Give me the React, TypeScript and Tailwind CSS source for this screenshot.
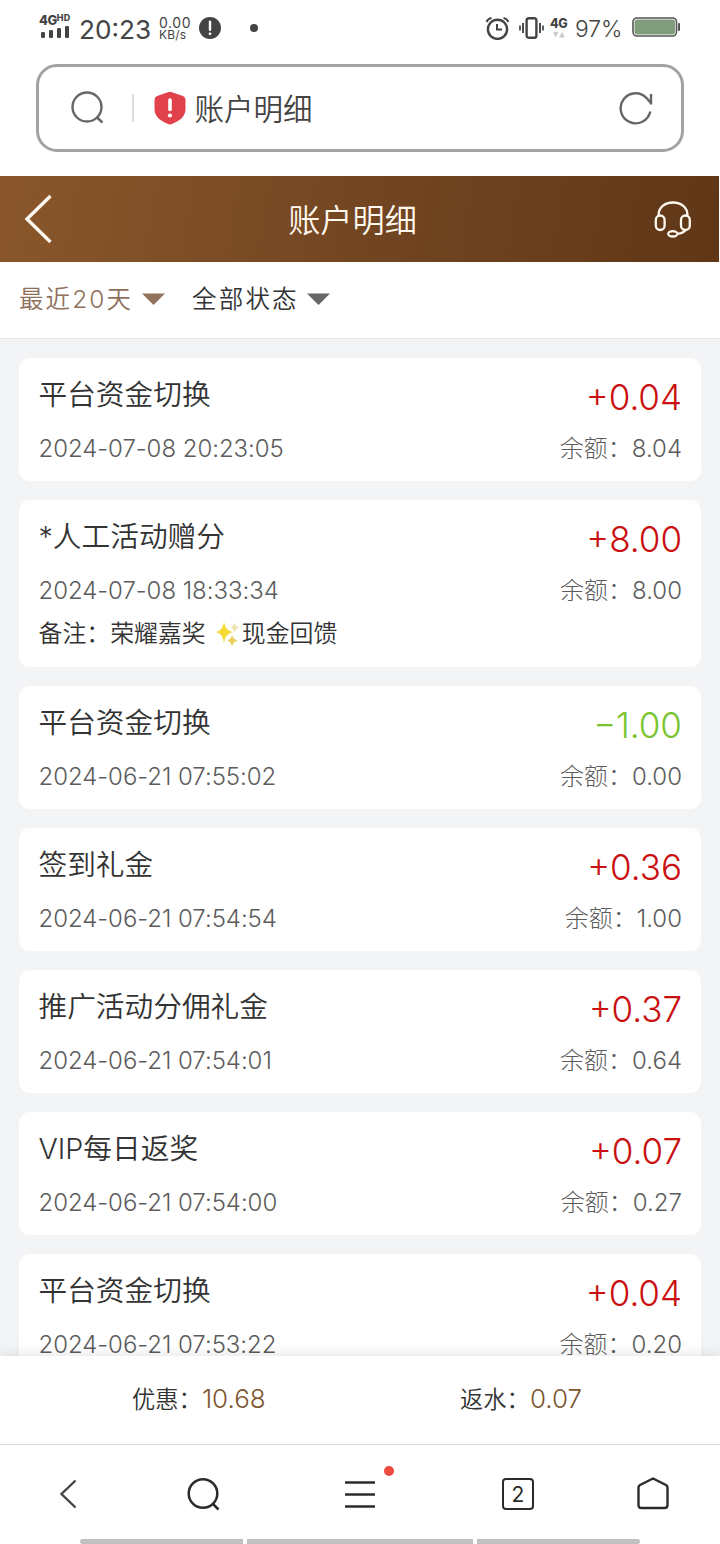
import React from 'react';
import clsx from 'clsx';

interface RecordItem {
  id: number;
  title: string;
  time: string;
  amount: string;
  balance: string;
  remark?: [string, string];
}

const records: RecordItem[] = [
  { id: 1, title: '平台资金切换', time: '2024-07-08 20:23:05', amount: '+0.04', balance: '8.04' },
  { id: 2, title: '*人工活动赠分', time: '2024-07-08 18:33:34', amount: '+8.00', balance: '8.00', remark: ['荣耀嘉奖', '现金回馈'] },
  { id: 3, title: '平台资金切换', time: '2024-06-21 07:55:02', amount: '-1.00', balance: '0.00' },
  { id: 4, title: '签到礼金', time: '2024-06-21 07:54:54', amount: '+0.36', balance: '1.00' },
  { id: 5, title: '推广活动分佣礼金', time: '2024-06-21 07:54:01', amount: '+0.37', balance: '0.64' },
  { id: 6, title: 'VIP每日返奖', time: '2024-06-21 07:54:00', amount: '+0.07', balance: '0.27' },
  { id: 7, title: '平台资金切换', time: '2024-06-21 07:53:22', amount: '+0.04', balance: '0.20' },
];

const StatusBar: React.FC = () => (
  <div className="flex h-[64px] shrink-0 items-start pl-[39px] pr-[39px] pt-[14px] text-[#444]">
    <div className="w-[32px]">
      <div className="flex h-[12px] items-start font-extrabold leading-[12px]">
        <span className="text-[13px] tracking-[-0.5px]">4G</span>
        <span className="text-[9px] leading-[8px] tracking-[0.2px]">HD</span>
      </div>
      <svg width="32" height="13" viewBox="0 0 32 13" fill="currentColor">
        <rect x="2" y="6" width="4" height="6" rx="1.3" />
        <rect x="10" y="4" width="4" height="8" rx="1.3" />
        <rect x="18" y="2" width="4" height="10" rx="1.3" />
        <rect x="26" y="0" width="4" height="12" rx="1.3" />
      </svg>
    </div>
    <span className="ml-[8px] mt-px w-[72px] whitespace-nowrap text-[26.2px] leading-[30px]">20:23</span>
    <div className="ml-[8px] mt-[2px] w-[33px] whitespace-nowrap">
      <div className="text-[14px] leading-[13px] tracking-[0.6px]">0.00</div>
      <div className="text-[12px] leading-[12px] tracking-[0.2px]">KB/s</div>
    </div>
    <svg className="ml-[7px] mt-[3px]" width="22" height="22" viewBox="0 0 22 22">
      <circle cx="11" cy="11" r="11" fill="#444" />
      <path d="M11 4.800v8" stroke="#fff" strokeWidth="2.400" strokeLinecap="round" />
      <circle cx="11" cy="16.800" r="1.400" fill="#fff" />
    </svg>
    <span className="ml-[29px] mt-[10px] size-[8px] rounded-full bg-[#444]" />

    <div className="ml-auto flex">
      <svg className="mt-[2px]" width="24" height="24" viewBox="0 0 24 24" fill="none" stroke="currentColor" strokeWidth="2.400">
        <circle cx="12.500" cy="13.300" r="9.600" />
        <path d="M12 8v5.500h5" strokeWidth="2" />
        <path d="M1.500 6Q3 2.600 6.500 2M23.500 6Q22 2.600 18.500 2" strokeWidth="2" />
      </svg>
      <svg className="ml-[9px] mt-[2px]" width="27" height="24" viewBox="0 0 27 24" fill="none" stroke="currentColor">
        <rect x="8.600" y="2.200" width="9.800" height="19.600" rx="2.400" strokeWidth="2.400" />
        <path d="M5 7v10M22 7v10" strokeWidth="1.900" />
        <path d="M2 9.500v5M25 9.500v5" strokeWidth="1.700" />
      </svg>
      <div className="ml-[5px] mt-[3px] w-[17px]">
        <div className="text-[12.500px] font-extrabold leading-[13px] tracking-[-0.400px]">4G</div>
        <svg width="17" height="8" viewBox="0 0 17 8" fill="#ccc">
          <path d="M3 2h5.500L5.700 7.500zM9 7.500h6L12 2z" />
        </svg>
      </div>
      <span className="ml-[8px] w-[48px] whitespace-nowrap text-[22.800px] font-light leading-[30px]">97%</span>
      <svg className="ml-[9px] mt-[3px]" width="49" height="21" viewBox="0 0 49 21">
        <rect x="1" y="1" width="43.500" height="18" rx="4" fill="#fff" stroke="#555" strokeWidth="1.600" />
        <rect x="2.500" y="2.500" width="40.500" height="15" rx="2.500" fill="#7f9d7c" />
        <rect x="46" y="6" width="2" height="8" rx="1" fill="#555" />
      </svg>
    </div>
  </div>
);

const AddressBar: React.FC = () => (
  <div className="mx-[36px] flex h-[88px] shrink-0 items-center rounded-[21px] border-[3px] border-[#a3a3a3] pl-[32px] pr-[28px]">
    <svg width="34" height="34" viewBox="0 0 34 34" fill="none" stroke="#666" strokeWidth="2.400">
      <circle cx="16" cy="16" r="14.500" />
      <path d="M25.500 26l6 5.500" />
    </svg>
    <span className="ml-[27px] h-[28px] w-[1.500px] bg-[#ddd]" />
    <svg className="ml-[20px]" width="32" height="34" viewBox="0 0 32 34">
      <path d="M14 1.200Q16 .3 18 1.200L29 5Q31.500 6 31.500 9V18C31.500 26 25 30 18 33Q16 33.800 14 33C7 30 .5 26 .5 18V9Q.5 6 3 5Z" fill="#e0414a" />
      <path d="M16 9v9.500" stroke="#fff" strokeWidth="3.600" strokeLinecap="round" />
      <circle cx="16" cy="24.500" r="2.100" fill="#fff" />
    </svg>
    <span className="ml-[9px] pt-[2px] text-[29.500px] font-[350] leading-[40px] text-[#444]">账户明细</span>
    <svg className="ml-auto" width="34" height="34" viewBox="0 0 34 34" fill="none" stroke="#666" strokeWidth="2.400">
      <path d="M31.300 20.500A15 15 0 1 1 28 7.500L31.500 11.500" />
      <path d="M32 3v10.500" />
    </svg>
  </div>
);

const PageHeader: React.FC = () => (
  <div className="mr-px mt-[24px] flex h-[86px] shrink-0 items-center justify-between bg-linear-100 from-[#8a572b] via-[#734622] to-[#5f3717] pl-[24px] pr-[28px]">
    <svg width="30" height="50" viewBox="0 0 30 50" fill="none" stroke="#fff8ee" strokeWidth="3.400">
      <path d="M26.500 2L3 25l23.500 23" />
    </svg>
    <span className="pr-[3px] pt-[3px] text-[32.200px] font-[350] leading-[44px] text-[#fff8ee]">账户明细</span>
    <svg width="37" height="37" viewBox="0 0 37 37" fill="none" stroke="#fff8ee" strokeWidth="2.300">
      <path d="M4.500 14.500C4.500 6 11 1.500 19 1.500S33.500 6 33.500 14.500" />
      <rect x="1.800" y="14.500" width="8.800" height="14.500" rx="4.400" />
      <rect x="27" y="14.500" width="8.800" height="14.500" rx="4.400" />
      <ellipse cx="18.800" cy="32.800" rx="4.600" ry="2.700" />
      <path d="M32 28.500Q29 32.500 23.500 32.800" />
    </svg>
  </div>
);

const Filters: React.FC = () => (
  <div className="flex h-[77px] shrink-0 border-b border-[#e6e7e9] pl-[19px] pt-[17px] text-[24.500px] font-[350] leading-[40px]">
    <div className="flex w-[173px] text-[#8e705b]">
      <span className="whitespace-nowrap tracking-[2.100px]">最近20天</span>
      <svg className="ml-auto mr-[27px] mt-[14px]" width="23" height="12" viewBox="0 0 23 12" fill="#93725c">
        <path d="M0 .5h23L11.500 12z" />
      </svg>
    </div>
    <div className="flex w-[138px] text-[#333]">
      <span className="whitespace-nowrap tracking-[2.200px]">全部状态</span>
      <svg className="ml-auto mt-[14px]" width="23" height="12" viewBox="0 0 23 12" fill="#666">
        <path d="M0 .5h23L11.500 12z" />
      </svg>
    </div>
  </div>
);

const Sparkles: React.FC = () => (
  <svg className="mr-[2px]" width="25" height="28" viewBox="0 0 25 28">
    <path d="M9 2Q10.500 10.500 18 12Q10.500 13.500 9 23Q7.500 13.500 1 12Q7.500 10.500 9 2Z" fill="#f5dc35" />
    <path d="M17 14.500Q17.800 19.500 23 20.500Q17.800 21.500 17 27Q16.200 21.500 12 20.500Q16.200 19.500 17 14.500Z" fill="#ead05b" />
    <path d="M19.500 2Q20.200 6.500 24 7.500Q20.200 8.500 19.500 13Q18.800 8.500 15.500 7.500Q18.800 6.500 19.500 2Z" fill="#efe4b0" />
  </svg>
);

const RecordCard: React.FC<{ item: RecordItem }> = ({ item }) => {
  const isIncome = item.amount.startsWith('+');

  return (
    <div
      className={clsx(
        'flex shrink-0 flex-col rounded-[11px] bg-white pl-[19.5px] pr-[19px] pt-[17px] font-[350]',
        item.remark ? 'h-[167px]' : 'h-[123px]',
      )}
    >
      <div className="flex h-[61px] justify-between">
        <span className="text-[28.700px] leading-[40px] text-[#333]">{item.title}</span>
        <span className={clsx('pt-[2px] text-[35px] font-light leading-[40px]', isIncome ? 'text-[#c90f0f]' : 'text-[#7ac52f]')}>
          {item.amount.replace('-', '−')}
        </span>
      </div>
      <div className="flex h-[26px] justify-between text-[24px] font-light leading-[26px] text-[#5c5c5c]">
        <span className="tracking-[-0.050px]">{item.time}</span>
        <span>余额：{item.balance}</span>
      </div>
      {item.remark && (
        <div className="mt-[13px] flex h-[34px] items-center text-[23.900px] leading-[34px] text-[#333]">
          <span>备注：{item.remark[0]}</span>
          <span className="w-[9px]" />
          <Sparkles />
          <span>{item.remark[1]}</span>
        </div>
      )}
    </div>
  );
};

const SummaryBar: React.FC = () => (
  <div className="z-10 flex h-[88px] shrink-0 bg-white text-[#333] shadow-[0_-2px_12px_rgba(0,0,0,0.1)]">
    <div className="flex w-[328px] pl-[132px] pt-[22px] leading-[42px]">
      <span className="pt-px text-[23.300px] font-[350]">优惠：</span>
      <span className="text-[26px] font-light text-[#7d5630]">10.68</span>
    </div>
    <div className="flex pl-[132px] pt-[22px] leading-[42px]">
      <span className="pt-px text-[23.300px] font-[350]">返水：</span>
      <span className="text-[26px] font-light text-[#7d5630]">0.07</span>
    </div>
  </div>
);

const BrowserNav: React.FC = () => (
  <div className="z-10 flex h-[100px] shrink-0 flex-col border-t border-[#dcdcdc] bg-white">
    <div className="flex h-[94px] items-center pl-[59px] pr-[50px] pt-[3px] text-[#2b2b2b]">
      <svg width="18" height="30" viewBox="0 0 18 30" fill="none" stroke="#444" strokeWidth="2.400">
        <path d="M16.500 1.500L2.500 15l14 13.500" />
      </svg>
      <svg className="ml-[110px]" width="34" height="34" viewBox="0 0 34 34" fill="none" stroke="currentColor" strokeWidth="2.500">
        <circle cx="16" cy="16.500" r="14.300" />
        <path d="M25.500 26.500l6 6" />
      </svg>
      <div className="relative ml-[124px] h-[32px] w-[30px]">
        <svg width="30" height="32" viewBox="0 0 30 32" stroke="currentColor" strokeWidth="2.500">
          <path d="M0 4.500h30M0 16.500h30M0 28.500h30" />
        </svg>
        <span className="absolute -top-[12px] left-[39px] size-[10px] rounded-full bg-[#ee4a3f]" />
      </div>
      <div className="ml-[127px] flex size-[32px] items-center justify-center rounded-[4px] border-[2.500px] border-current pt-[2px] text-[21px] leading-none">
        2
      </div>
      <svg className="ml-[103px]" width="32" height="34" viewBox="0 0 32 34" fill="none" stroke="currentColor" strokeWidth="2.400" strokeLinejoin="round">
        <path d="M16 1.500L29 8Q30.500 9 30.500 10.500V28Q30.500 31 27.500 31H4.500Q1.500 31 1.500 28V10.500Q1.500 9 3 8Z" />
      </svg>
    </div>
    <div className="flex gap-[4px] pl-[80px]">
      <span className="h-[5px] w-[163px] rounded-l-full bg-[#c1c1c1]" />
      <span className="h-[5px] w-[226px] bg-[#c1c1c1]" />
      <span className="h-[5px] w-[163px] rounded-r-full bg-[#c1c1c1]" />
    </div>
  </div>
);

export default function App() {
  return (
    <div className="flex h-[1544px] w-[720px] flex-col overflow-hidden bg-white font-['Inter','Noto_Sans_CJK_SC',sans-serif]">
      <StatusBar />
      <AddressBar />
      <PageHeader />
      <Filters />
      <div className="flex min-h-0 flex-1 flex-col gap-[19px] overflow-hidden bg-[#f3f4f6] px-[19px] pt-[19px]">
        {records.map((item) => (
          <RecordCard key={item.id} item={item} />
        ))}
      </div>
      <SummaryBar />
      <BrowserNav />
    </div>
  );
}
